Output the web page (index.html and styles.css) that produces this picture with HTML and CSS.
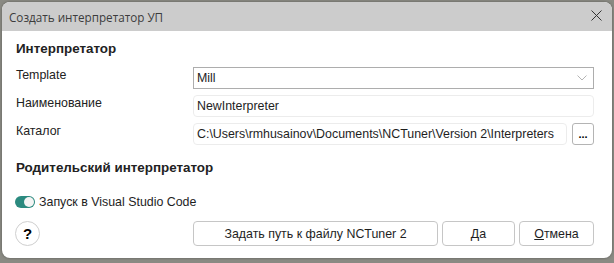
FILE: index.html
```html
<!DOCTYPE html>
<html lang="ru">
<head>
    <meta charset="UTF-8">
    <title>Создать интерпретатор УП</title>
    <link rel="stylesheet" href="styles.css">
</head>
<body>

<div class="window">
    <div class="titlebar">
        <span class="title">Создать интерпретатор УП</span>
        <svg class="close" width="11" height="11" viewBox="0 0 11 11">
            <path d="M0.5 0.5 L10.5 10.5 M10.5 0.5 L0.5 10.5" stroke="#333" stroke-width="1" fill="none"/>
        </svg>
    </div>

    <div class="content">
        <h3>Интерпретатор</h3>

        <div class="form">
            <label>Template</label>
            <div class="combo">
                <span>Mill</span>
                <svg width="10" height="6" viewBox="0 0 10 6">
                    <path d="M0.5 0.5 L5 5 L9.5 0.5" stroke="#b4b4b4" stroke-width="1" fill="none"/>
                </svg>
            </div>

            <label>Наименование</label>
            <input type="text" class="field" value="NewInterpreter">

            <label>Каталог</label>
            <div class="path-row">
                <input type="text" class="field" value="C:\Users\rmhusainov\Documents\NCTuner\Version 2\Interpreters">
                <button class="browse">...</button>
            </div>
        </div>

        <h3 class="parent">Родительский интерпретатор</h3>

        <div class="toggle-row">
            <span class="toggle"><span class="knob"></span></span>
            <span>Запуск в Visual Studio Code</span>
        </div>

        <!-- bottom buttons -->
        <div class="buttons">
            <button class="help">?</button>
            <button class="btn wide">Задать путь к файлу NCTuner 2</button>
            <button class="btn ok"><u>Д</u>а</button>
            <button class="btn cancel"><u>О</u>тмена</button>
        </div>
    </div>
</div>

</body>
</html>
```

FILE: styles.css
```css
body {
    margin: 0;
    background-color: #8a8a83;
    font-family: "Liberation Sans", Arial, sans-serif;
    font-size: 12.4px;
    color: #1e1e1e;
}
.window {
    margin: 2px;
    width: 610px;
    height: 256px;
    background: #fff;
    border-radius: 8px;
    overflow: hidden;
    box-shadow: 0 0 3px rgba(0, 0, 0, 0.35);
}
.titlebar {
    height: 29px;
    background: #cccccc;
    display: flex;
    align-items: center;
    justify-content: space-between;
    padding: 0 10px 0 7px;
}
.title {
    font-family: "Open Sans", "Noto Sans", sans-serif;
    font-size: 11.7px;
    color: #3c3c3c;
    padding-top: 1px;
}
.close {
    margin-top: -2px;
}
.content {
    padding: 10px 18px 0 13px;
}
h3 {
    margin: 0 0 0 1px;
    font-size: 13.4px;
    line-height: 15px;
    font-weight: bold;
    color: #222;
}
.form {
    display: grid;
    grid-template-columns: 178px 1fr;
    grid-auto-rows: 22px;
    row-gap: 6px;
    margin-top: 11px;
}
.form label {
    padding: 1px 0 0 1px;
    line-height: 14px;
    color: #222;
}
.combo {
    border: 1px solid #adadad;
    display: flex;
    align-items: center;
    justify-content: space-between;
    padding: 0 6px 0 3px;
    box-sizing: border-box;
}
.field {
    font: inherit;
    color: #1e1e1e;
    border: 1px solid #ececec;
    border-radius: 4px;
    padding: 0 3px;
    height: 22px;
    box-sizing: border-box;
    width: 100%;
    outline: none;
}
.path-row {
    display: flex;
    gap: 5px;
}
.browse {
    width: 22px;
    height: 22px;
    flex: none;
    padding: 0;
    border: 1px solid #b4b4b4;
    border-radius: 3px;
    background: #fff;
    font: bold 11px "Liberation Sans", Arial, sans-serif;
    line-height: 14px;
}
.parent {
    margin-top: 15px;
}
.toggle-row {
    display: flex;
    align-items: center;
    gap: 4px;
    margin-top: 20px;
    height: 14px;
}
.toggle {
    width: 20px;
    height: 12px;
    border-radius: 6px;
    background: #2b8a7f;
    position: relative;
}
.knob {
    position: absolute;
    right: 1px;
    top: 1px;
    width: 10px;
    height: 10px;
    border-radius: 50%;
    background: #f4f4f4;
}
.buttons {
    display: flex;
    align-items: center;
    gap: 4px;
    margin-top: 12px;
}
.help {
    width: 25px;
    height: 25px;
    border-radius: 50%;
    border: 1px solid #cfcfcf;
    background: #fff;
    font: bold 15px "Liberation Sans", Arial, sans-serif;
    padding: 0;
    margin-right: 149px;
}
.btn {
    height: 25px;
    border: 1px solid #c6c6c6;
    border-radius: 4px;
    background: #fff;
    font: inherit;
    color: #1e1e1e;
    padding: 0;
}
.btn.wide {
    width: 245px;
}
.btn.ok {
    width: 73px;
}
.btn.cancel {
    width: 75px;
}
```
